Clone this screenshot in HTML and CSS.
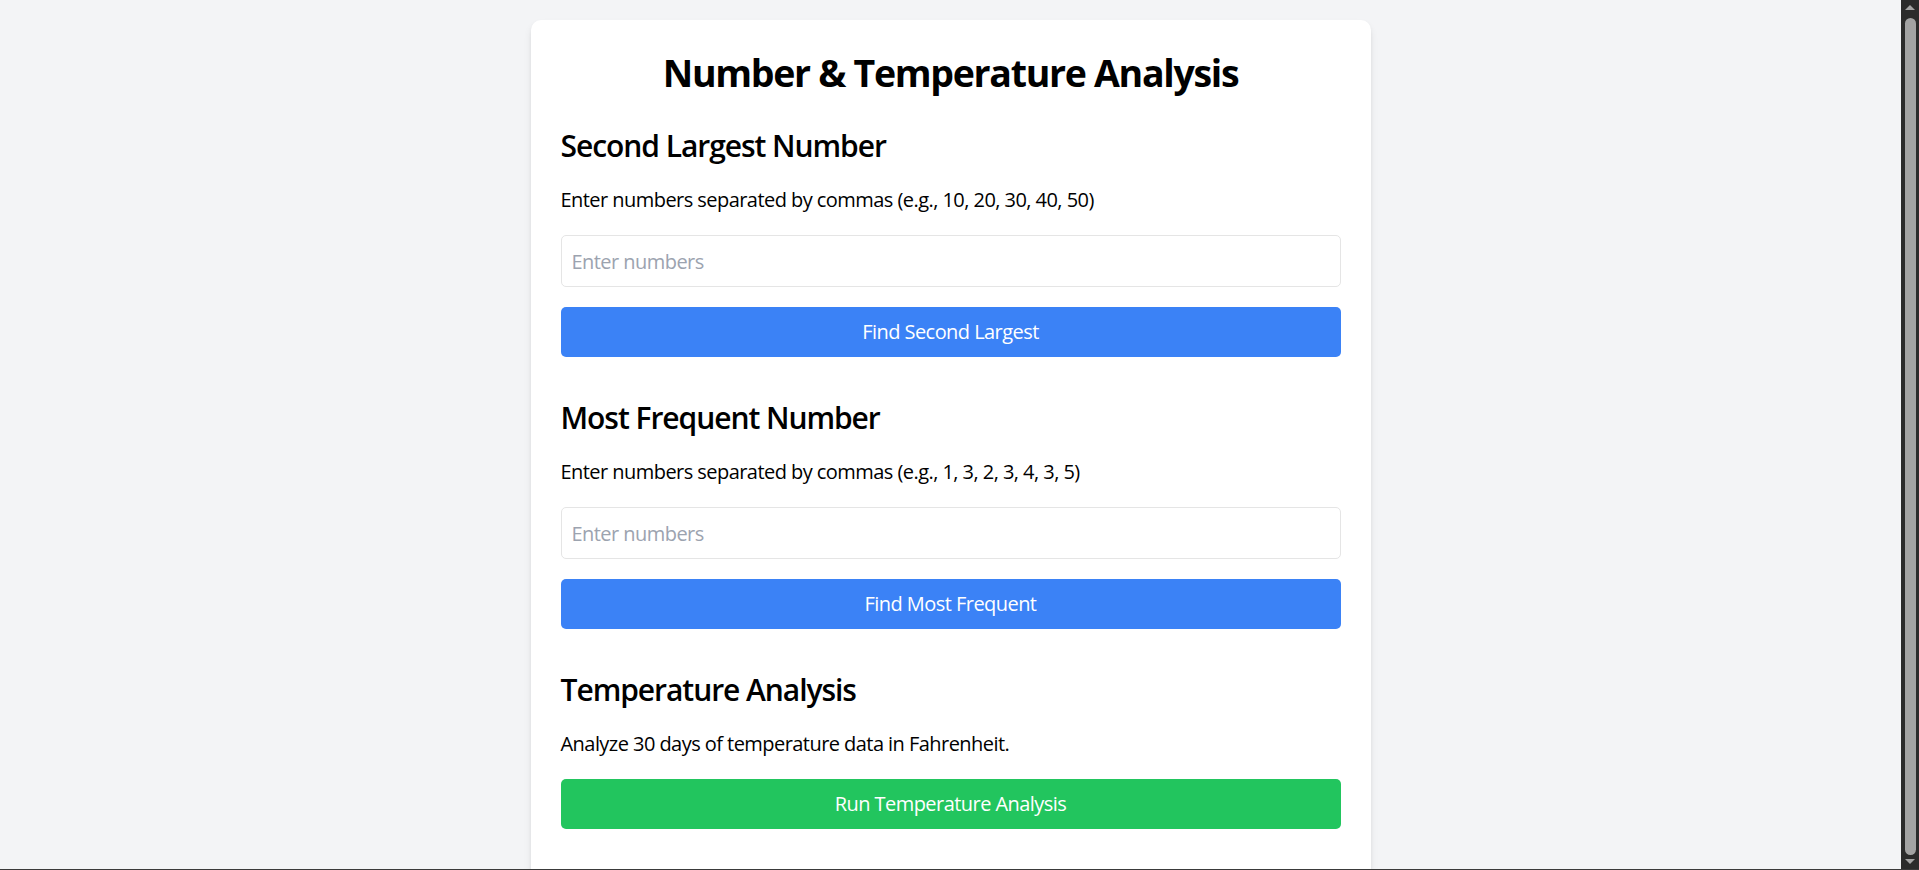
FILE: index.html
```html
<!DOCTYPE html>
<html lang="en">
<head>
<meta charset="utf-8">
<title>Number &amp; Temperature Analysis</title>
<link rel="stylesheet" href="styles.css">
</head>
<body>
<div class="viewport">
  <div class="page">
    <main class="card">
      <h1 class="title">Number &amp; Temperature Analysis</h1>

      <section class="section">
        <h2 class="section-title">Second Largest Number</h2>
        <p class="hint">Enter numbers separated by commas (e.g., 10, 20, 30, 40, 50)</p>
        <input class="field" type="text" placeholder="Enter numbers">
        <button class="btn btn-blue" type="button">Find Second Largest</button>
      </section>

      <section class="section">
        <h2 class="section-title">Most Frequent Number</h2>
        <p class="hint">Enter numbers separated by commas (e.g., 1, 3, 2, 3, 4, 3, 5)</p>
        <input class="field" type="text" placeholder="Enter numbers">
        <button class="btn btn-blue" type="button">Find Most Frequent</button>
      </section>

      <section class="section">
        <h2 class="section-title">Temperature Analysis</h2>
        <p class="hint">Analyze 30 days of temperature data in Fahrenheit.</p>
        <button class="btn btn-green" type="button">Run Temperature Analysis</button>
      </section>

      <div class="results"></div>
    </main>
  </div>
</div>
<div class="scrollbar" aria-hidden="true">
  <span class="arrow arrow-up"></span>
  <span class="thumb"></span>
  <span class="arrow arrow-down"></span>
</div>
<div class="window-edge"></div>
</body>
</html>
```

FILE: styles.css
```css
html, body {
  margin: 0;
  padding: 0;
}

body {
  display: flex;
  height: 100vh;
  overflow: hidden;
  background: #f3f4f6;
  color: #000;
  font-family: "Open Sans", "Noto Sans", "Liberation Sans", sans-serif;
}

.viewport {
  flex: 1;
  min-width: 0;
  height: 100vh;
  overflow: hidden;
}

.scrollbar {
  flex: 0 0 18px;
  display: flex;
  flex-direction: column;
  align-items: center;
  height: 100vh;
  background: #2b2b2b;
}

.arrow {
  flex: 0 0 auto;
  width: 0;
  height: 0;
  border-left: 5px solid transparent;
  border-right: 5px solid transparent;
}
.arrow-up {
  margin: 5px 0 8px;
  border-bottom: 5px solid #a3a3a3;
}
.arrow-down {
  margin: 4px 0 6px;
  border-top: 5px solid #a3a3a3;
}

.thumb {
  flex: 1;
  width: 11px;
  border-radius: 6px;
  background: #a3a3a3;
}

.page {
  padding: 20px 0;
}

.card {
  box-sizing: border-box;
  width: 840px;
  margin: 0 auto;
  padding: 30px;
  background: #fff;
  border-radius: 10px;
  box-shadow: 0 5px 8px -1px rgba(0, 0, 0, 0.1), 0 2px 5px -2px rgba(0, 0, 0, 0.1);
}

.title {
  margin: 0 0 30px;
  font-size: 37.5px;
  line-height: 45px;
  font-weight: 700;
  letter-spacing: -1.3px;
  text-align: center;
}

.section {
  margin-bottom: 40px;
}
.section:last-of-type {
  margin-bottom: 0;
}

.section-title {
  margin: 0 0 20px;
  padding-top: 1px;
  height: 39px;
  font-size: 30px;
  line-height: 40px;
  font-weight: 600;
  letter-spacing: -1.05px;
}

.hint {
  margin: 0 0 20px;
  font-size: 20px;
  line-height: 30px;
  letter-spacing: -0.55px;
}

.field {
  display: block;
  box-sizing: border-box;
  width: 100%;
  height: 52px;
  margin: 0 0 20px;
  padding: 10px;
  border: 1px solid #e5e5e5;
  border-radius: 5px;
  font: inherit;
  font-size: 20px;
  letter-spacing: -0.55px;
  color: #000;
  outline: none;
}
.field::placeholder {
  color: #9ca3af;
}

.btn {
  display: block;
  width: 100%;
  height: 50px;
  padding: 10px;
  border: 0;
  border-radius: 5px;
  color: #fff;
  font: inherit;
  font-size: 20px;
  line-height: 30px;
  letter-spacing: -0.55px;
  cursor: pointer;
}
.btn-blue {
  background: #3b82f6;
}
.btn-green {
  background: #22c55e;
}

.results {
  margin-top: 30px;
  min-height: 20px;
}

.window-edge {
  position: fixed;
  left: 0;
  right: 0;
  bottom: 0;
  height: 1px;
  background: #3a3a3a;
}
```
